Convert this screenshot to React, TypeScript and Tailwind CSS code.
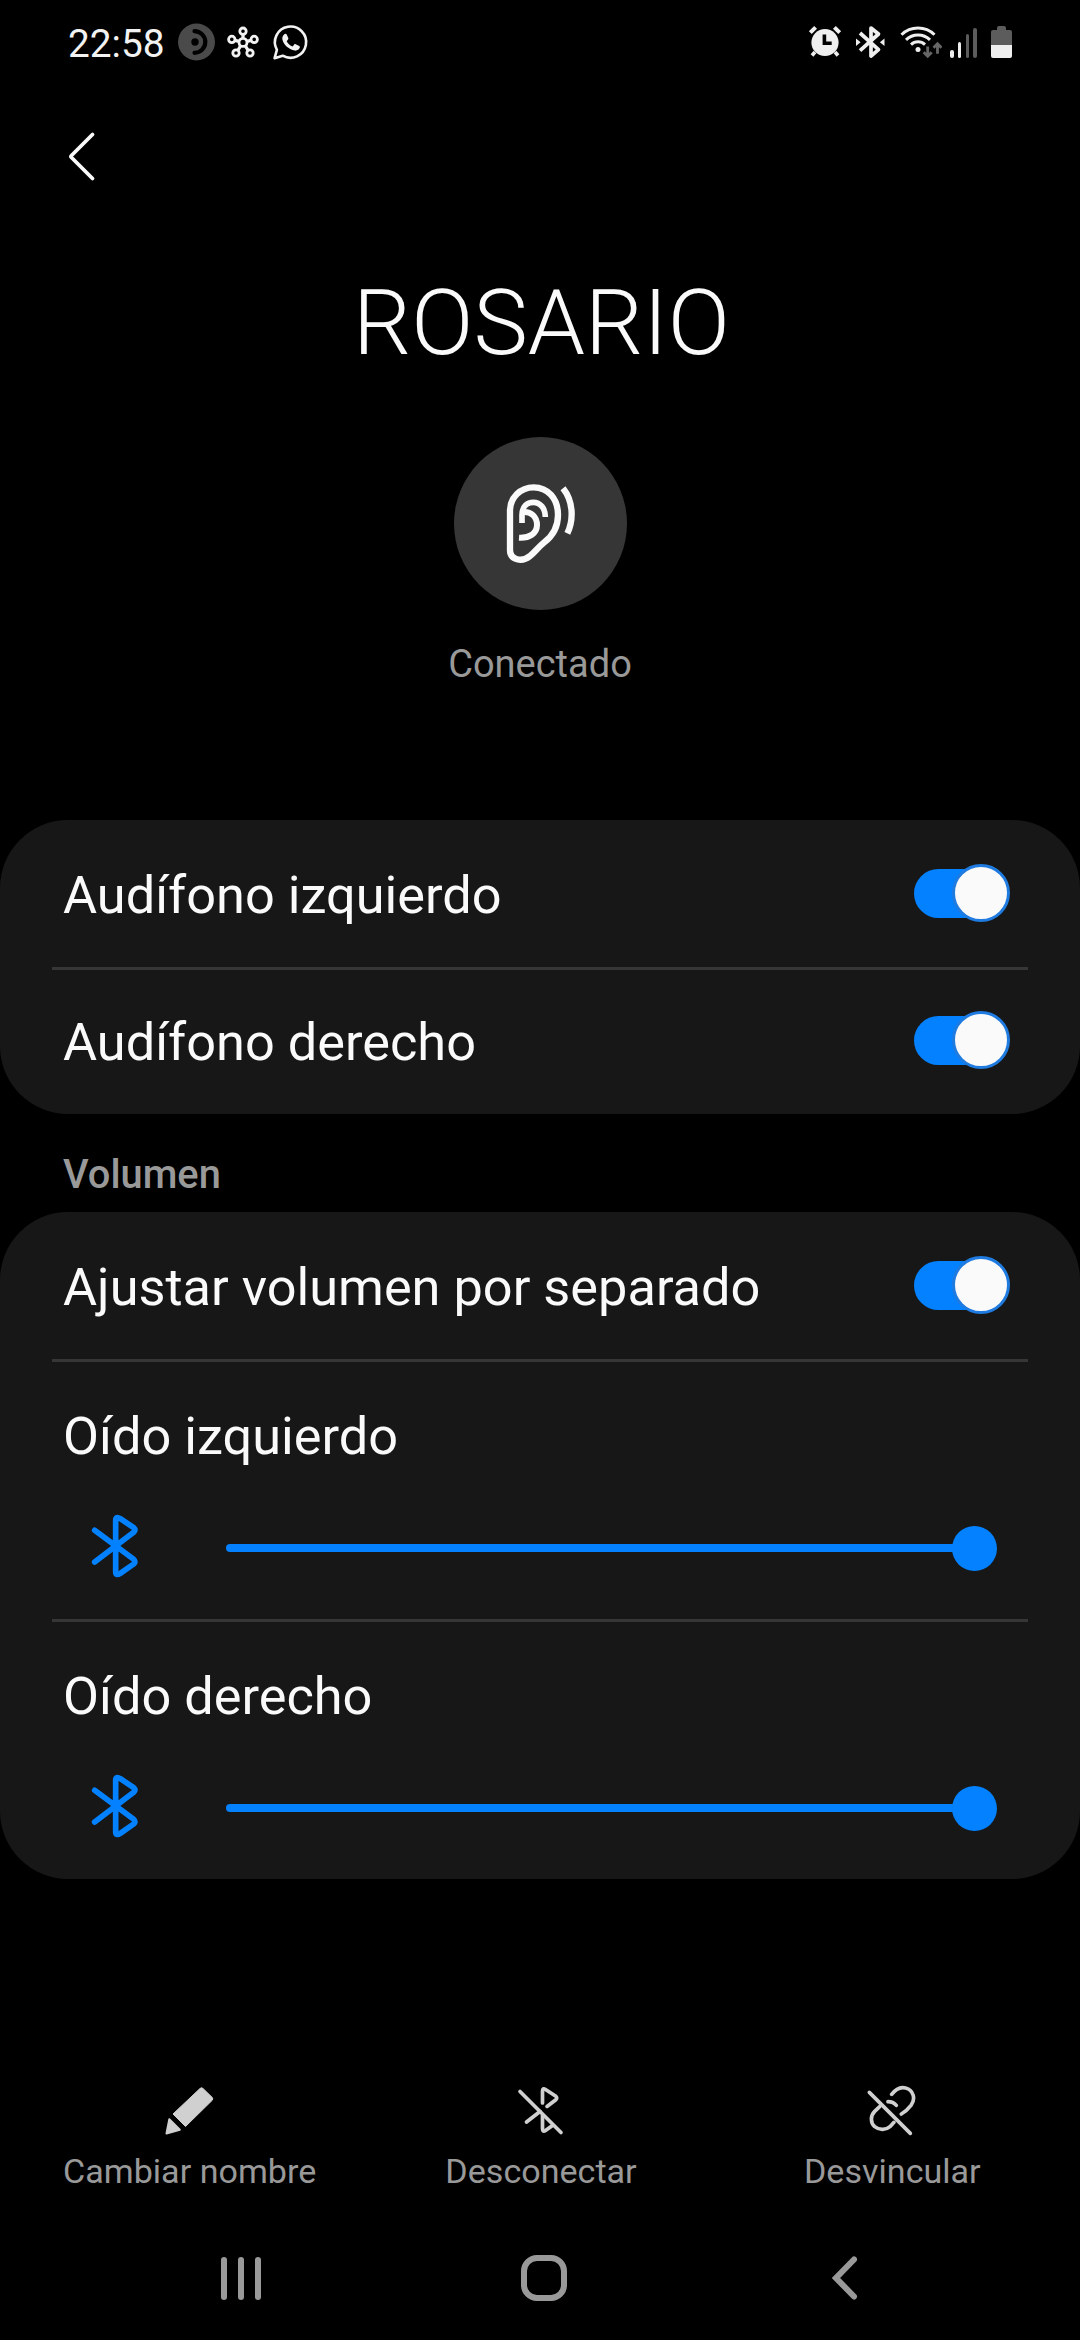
import { useState } from "react";

const ACCENT = "#0381fe";

function CastIcon() {
  return (
    <svg className="h-10 w-10" viewBox="0 0 40 40">
      <circle cx="20.5" cy="20" r="18.5" fill="#4a4a4a" />
      <path d="M18.5 9.200a10.800 10.800 0 0 1 0 21.600" fill="none" stroke="#000" strokeWidth="4.2" strokeLinecap="round" />
      <circle cx="19" cy="20" r="3.7" fill="#000" />
    </svg>
  );
}

function HubIcon() {
  const nodes = [
    [20, 9.2],
    [8.8, 17.4],
    [31.2, 17.4],
    [13, 31],
    [27, 31],
  ];
  return (
    <svg className="h-10 w-10" viewBox="0 0 40 40" fill="none" stroke="#f2f2f2" strokeWidth="2.8">
      <circle cx="20" cy="20.4" r="4" />
      <path d="M20 12.5v4M12 18.4l4 1M28 18.4l-4 1M15 28.3l2.6-4.4M25 28.3l-2.6-4.4" strokeWidth="3.2" />
      {nodes.map(([x, y]) => (
        <circle key={`${x}-${y}`} cx={x} cy={y} r="3.2" />
      ))}
    </svg>
  );
}

function ChatIcon() {
  return (
    <svg className="h-10 w-10" viewBox="0 0 40 40">
      <path d="M4.6 36.2l2.3-8.4A15.6 15.6 0 1 1 12.7 33.7z" fill="none" stroke="#f2f2f2" strokeWidth="2.6" strokeLinejoin="round" />
      <path
        d="M14.3 12.2c.7-.7 2-.7 2.4.2l1.6 3.7c.2.6.1 1-.3 1.5l-1.3 1.6c1.3 2.5 3.4 4.3 6 5.3l1.5-1.9c.4-.5.9-.6 1.5-.4l3.5 1.7c.7.4.8.9.6 1.7-.6 2.1-2.8 3.3-5 3-6.3-1-11.6-6-12.5-11.5-.2-1.900.6-3.500 2-4.900z"
        fill="#f2f2f2"
      />
    </svg>
  );
}

function AlarmIcon() {
  return (
    <svg className="h-[34px] w-[34px]" viewBox="0 0 34 34" fill="none" stroke="#efefef">
      <circle cx="17" cy="17.5" r="13.6" fill="#efefef" stroke="none" />
      <path d="M2.3 7.6l5.3-5.3M31.700 7.600l-5.300-5.300" strokeWidth="4" />
      <path d="M7 27l-3 3.500M27 27l3 3.500" strokeWidth="3.6" />
      <path d="M16.400 9.500v8.800h7.300" stroke="#000" strokeWidth="3.6" />
    </svg>
  );
}

function StatusBluetoothIcon() {
  return (
    <svg className="h-[34px] w-[30px]" viewBox="0 0 30 34">
      <path d="M5 8l18.500 16.600-7.500 6.400V3l7.500 6L5 25.600" fill="none" stroke="#efefef" strokeWidth="3.7" strokeLinejoin="round" />
      <path d="M1 13.500l4.600 3.700L1 21zM29.500 13.500l-4.600 3.700 4.600 3.800z" fill="#efefef" />
    </svg>
  );
}

function WifiIcon() {
  return (
    <svg className="h-[34px] w-[42px]" viewBox="0 0 42 34" fill="none">
      <path d="M1.500 9.700a23.500 23.500 0 0 1 33 0M6 14.900a17 17 0 0 1 24 0M11 19.600a10.300 10.300 0 0 1 14 0" stroke="#efefef" strokeWidth="3" />
      <circle cx="18" cy="24.500" r="2.5" fill="#efefef" />
      <path d="M27.700 21.500v9M23.700 27.300l4 4 4-4M37.500 28.800v-9M33.500 22.700l4-4 4 4" stroke="#666" strokeWidth="2.8" />
    </svg>
  );
}

function SignalBars() {
  return (
    <div className="flex h-[34px] w-[27px] items-end justify-between pb-px">
      <span className="h-2 w-[3.5px] rounded-xs bg-[#efefef]" />
      <span className="h-4 w-[3.5px] rounded-xs bg-[#efefef]" />
      <span className="h-6 w-[3.5px] rounded-xs bg-[#5c5c5c]" />
      <span className="h-[30px] w-[3.5px] rounded-xs bg-[#5c5c5c]" />
    </div>
  );
}

function Battery() {
  return (
    <div className="flex h-[33px] w-[21px] flex-col items-center">
      <span className="h-1 w-[9px] rounded-t-xs bg-[#5c5c5c]" />
      <span className="h-[15px] w-full rounded-t-xs bg-[#5c5c5c]" />
      <span className="h-[13px] w-full rounded-b-xs bg-[#efefef]" />
    </div>
  );
}

function StatusBar() {
  return (
    <div className="flex h-[84px] items-center justify-between px-[68px]">
      <div className="flex items-center">
        <span className="w-[108px] pt-[3px] text-[38.8px] leading-10 text-[#f2f2f2]">22:58</span>
        <CastIcon />
        <span className="ml-[7px] flex">
          <HubIcon />
        </span>
        <span className="ml-[7px] flex">
          <ChatIcon />
        </span>
      </div>
      <div className="flex items-center">
        <AlarmIcon />
        <span className="ml-[13px] flex">
          <StatusBluetoothIcon />
        </span>
        <span className="ml-[15px] flex">
          <WifiIcon />
        </span>
        <span className="ml-2 flex">
          <SignalBars />
        </span>
        <span className="ml-[14px] flex">
          <Battery />
        </span>
      </div>
    </div>
  );
}

function EarIcon() {
  return (
    <svg className="h-[173px] w-[173px]" viewBox="369 531 519 519" fill="none" stroke="#fafafa" strokeWidth="19">
      <path d="M537 870V752C537 712 569 682 608 682C650 682 681 715 681 765C681 805 662 830 640 847C620 863 610 878 597 888C573 908 537 900 537 870Z" />
      <path d="M573 789V765C573 740 588 727 607 727C628 727 643 745 643 771" strokeWidth="17" />
      <path d="M564 833C595 835 618 820 618 795C618 770 600 754 576 756" strokeWidth="18" />
      <path d="M696 685C728 725 728 780 709 820" />
    </svg>
  );
}

function Toggle({ on, onChange }: { on: boolean; onChange: () => void }) {
  return (
    <button type="button" role="switch" aria-checked={on} onClick={onChange} className="flex h-[58px] w-24 items-center">
      <span className={on ? "flex h-[49px] w-[94px] items-center justify-end rounded-full bg-[#0381fe]" : "flex h-[49px] w-[94px] items-center rounded-full bg-[#5c5c5c]"}>
        <span className={on ? "-mr-0.5 h-[58px] w-[58px] shrink-0 rounded-full border-3 border-[#1f7bdf] bg-[#fafafa]" : "h-[58px] w-[58px] shrink-0 rounded-full border-3 border-[#777] bg-[#fafafa]"} />
      </span>
    </button>
  );
}

function ToggleRow({ label }: { label: string }) {
  const [on, setOn] = useState(true);
  return (
    <div className="flex h-[147px] items-center justify-between pr-[70px] pb-px pl-[63px]">
      <span className="pt-[3px] text-[52.3px] leading-[62px] text-[#fafafa]">{label}</span>
      <Toggle on={on} onChange={() => setOn(!on)} />
    </div>
  );
}

function Divider() {
  return <div className="mx-[52px] -mb-[3px] h-[3px] bg-[#363636]" />;
}

function SliderRow({ label, value }: { label: string; value: number }) {
  return (
    <div className="h-[260px] pt-[46px] pr-[83px] pl-[63px]">
      <div className="text-[52.3px] leading-[62px] text-[#fafafa]">{label}</div>
      <div className="mt-[49px] flex h-16 items-center">
        <svg className="mr-[83px] -mt-1 ml-[25px] h-16 w-[55px]" viewBox="145 370 165 192" fill="none" stroke={ACCENT} strokeWidth="17" strokeLinecap="round" strokeLinejoin="round">
          <path d="M165 419L282 506Q290 513 282 520L242 548Q228 557 228 543V389Q228 375 242 384L282 411Q290 418 282 425L165 514" />
        </svg>
        <div className="flex flex-1 items-center">
          <div className="-mr-6 h-2 rounded-l-full bg-[#0381fe]" style={{ width: `${value}%` }} />
          <div className="-ml-5 h-[45px] w-[45px] shrink-0 rounded-full bg-[#0381fe]" />
        </div>
      </div>
    </div>
  );
}

function PencilIcon() {
  return (
    <svg className="h-[52px] w-[52px]" viewBox="0 0 52 52" fill="#d0d0d0" stroke="#d0d0d0" strokeLinejoin="round">
      <path d="M10 30L37 4.500Q38.500 3 40 4.500L49.300 13.500Q50.500 15 49 16.500L22.500 42.500Z" strokeWidth="1" />
      <path d="M6.300 35.200L16.800 45.700L3.500 49.500Z" strokeWidth="2" />
    </svg>
  );
}

function BluetoothOffIcon() {
  return (
    <svg className="h-[52px] w-[52px]" viewBox="514 2084 52 52" fill="none" stroke="#d0d0d0" strokeWidth="3.7" strokeLinecap="round" strokeLinejoin="round">
      <path d="M520 2091.500L561 2132.500" />
      <path d="M542.500 2103V2091Q542.500 2087.500 545.500 2089.500L555.500 2096Q558 2098 555.500 2100L547 2106.500" />
      <path d="M526.500 2122L540 2111.500" />
      <path d="M542.500 2115V2128.500Q542.500 2132.500 545.500 2130.500L552.500 2125.500" />
    </svg>
  );
}

function UnlinkIcon() {
  return (
    <svg className="h-[52px] w-[52px]" viewBox="675 72 156 156" fill="none" stroke="#d0d0d0" strokeWidth="11" strokeLinecap="round">
      <path d="M688 97L811 220" />
      <path d="M755 103C768 86 783 80 797 84C820 90 828 116 813 136C805 146 795 156 784 162" />
      <path d="M719 140L704 154C691 167 691 188 704 200C719 212 738 210 750 200L762 187" />
      <path d="M744 125C755 125 763 129 769 136" />
    </svg>
  );
}

const actions = [
  { label: "Cambiar nombre", Icon: PencilIcon },
  { label: "Desconectar", Icon: BluetoothOffIcon },
  { label: "Desvincular", Icon: UnlinkIcon },
];

export default function App() {
  return (
    <div className="flex h-[2340px] w-[1080px] flex-col overflow-hidden bg-black font-['Roboto',sans-serif]">
      <StatusBar />

      <header className="flex h-[146px] items-center pl-[66px]">
        <svg className="h-[52px] w-8" viewBox="66 131 32 52" fill="none" stroke="#fafafa" strokeWidth="3.8" strokeLinecap="round" strokeLinejoin="round">
          <path d="M92.500 134.500L71.500 155.500Q70.500 156.500 71.500 157.500L92.500 178.500" />
        </svg>
      </header>

      <section className="flex h-[590px] flex-col items-center pt-[43px]">
        <h1 className="ml-[3px] text-[91.7px] leading-[100px] font-light text-[#fafafa]">ROSARIO</h1>
        <div className="mt-16 flex h-[173px] w-[173px] items-center justify-center rounded-full bg-[#363636]">
          <EarIcon />
        </div>
        <p className="mt-[30px] text-[38px] leading-[48px] text-[#999]">Conectado</p>
      </section>

      <section className="h-[294px] rounded-[68px] bg-[#171717]">
        <ToggleRow label="Audífono izquierdo" />
        <Divider />
        <ToggleRow label="Audífono derecho" />
      </section>

      <h2 className="h-[98px] pt-[37px] pl-[63px] text-[39.8px] leading-[48px] font-medium text-[#999]">Volumen</h2>

      <section className="h-[667px] rounded-[68px] bg-[#171717]">
        <ToggleRow label="Ajustar volumen por separado" />
        <Divider />
        <SliderRow label="Oído izquierdo" value={100} />
        <Divider />
        <SliderRow label="Oído derecho" value={100} />
      </section>

      <nav className="mt-[205px] grid h-[132px] grid-cols-3 px-[13px]">
        {actions.map(({ label, Icon }) => (
          <button key={label} type="button" className="flex flex-col items-center">
            <Icon />
            <span className="mt-[15px] ml-0.5 text-[34.1px] leading-10 text-[#999]">{label}</span>
          </button>
        ))}
      </nav>

      <footer className="flex h-[124px] items-center justify-between pr-[222px] pl-[221px]">
        <div className="flex gap-[11px]">
          <span className="h-[43px] w-1.5 rounded-full bg-[#999]" />
          <span className="h-[43px] w-1.5 rounded-full bg-[#999]" />
          <span className="h-[43px] w-1.5 rounded-full bg-[#999]" />
        </div>
        <span className="-ml-1.5 h-[46px] w-[46px] rounded-[16px] border-6 border-[#999]" />
        <svg className="h-[46px] w-[26px]" viewBox="0 0 26 46" fill="none" stroke="#999" strokeWidth="6" strokeLinecap="round">
          <path d="M22 4.500L4 23l18 18.500" />
        </svg>
      </footer>
    </div>
  );
}
